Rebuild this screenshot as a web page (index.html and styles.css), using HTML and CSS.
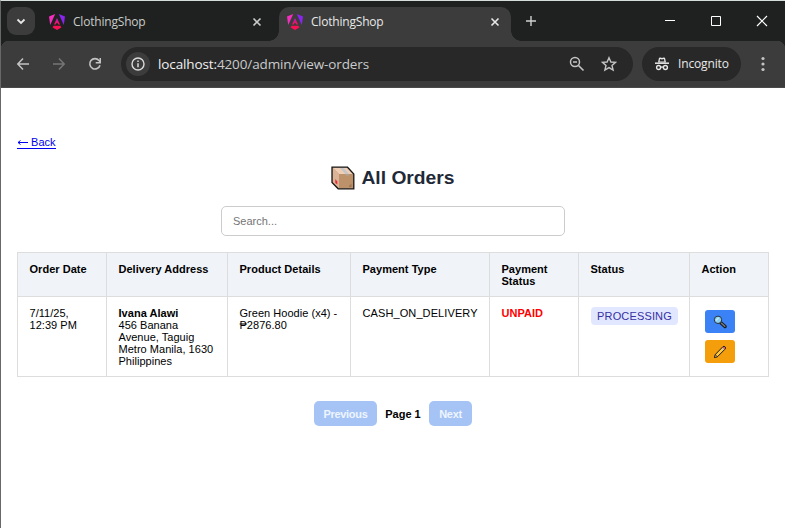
FILE: index.html
```html
<!DOCTYPE html>
<html lang="en">
<head>
<meta charset="utf-8">
<title>ClothingShop</title>
<link rel="stylesheet" href="styles.css">
</head>
<body>
<svg class="defs" width="0" height="0" aria-hidden="true">
  <defs>
    <linearGradient id="ng2" x1="0" y1="0" x2="0" y2="1"><stop offset="0" stop-color="#b01ad0"/><stop offset="1" stop-color="#ff0f50"/></linearGradient>
    <symbol id="angular" viewBox="0 0 16 16">
      <path fill="#f62ec0" d="M6.200 0 1.200 11 0 2.500z"/>
      <path fill="#8a25f0" d="M9.800 0l5 11 1.200-8.500z"/>
      <path fill="url(#ng2)" d="M8 4 11 10.500H9.400L8.800 9.200H7.200L6.600 10.500H5z"/>
      <path fill="#f80f55" d="M4.500 11.700h7l.9 1.900L8 16l-4.400-2.400z"/>
    </symbol>
    <symbol id="close" viewBox="0 0 10 10"><path d="M1.500 1.500l7 7M8.500 1.500l-7 7" fill="none" stroke="currentColor" stroke-width="1.600"/></symbol>
  </defs>
</svg>
<div class="window">
  <header class="tabs">
    <div class="tab-search"><svg width="10" height="7" viewBox="0 0 10 7"><path d="M1.500 1.500 5 5l3.500-3.500" fill="none" stroke="#e6e6e6" stroke-width="1.800"/></svg></div>
    <div class="tab">
      <svg class="fav" width="16" height="16"><use href="#angular"/></svg>
      <span>ClothingShop</span>
      <svg class="x" width="10" height="10"><use href="#close"/></svg>
    </div>
    <div class="tab active">
      <svg class="fav" width="16" height="16"><use href="#angular"/></svg>
      <span>ClothingShop</span>
      <svg class="x" width="10" height="10"><use href="#close"/></svg>
    </div>
    <svg class="plus" width="12" height="12" viewBox="0 0 12 12"><path d="M6 1v10M1 6h10" stroke="#d0d0d0" stroke-width="1.400"/></svg>
    <div class="controls">
      <svg width="12" height="12" viewBox="0 0 12 12"><path d="M1 5.500h10" stroke="#fff"/></svg>
      <svg width="12" height="12" viewBox="0 0 12 12"><path d="M1.500 1.500h9v9h-9z" fill="none" stroke="#fff"/></svg>
      <svg width="12" height="12" viewBox="0 0 12 12"><path d="M1 1l10 10M11 1 1 11" stroke="#fff" stroke-width="1.200"/></svg>
    </div>
  </header>
  <div class="toolbar">
    <div class="nav">
      <svg width="14" height="14" viewBox="0 0 14 14"><path d="M7 1.500 1.800 7 7 12.500M2 7h11" fill="none" stroke="#c4c4c4" stroke-width="1.500"/></svg>
      <svg width="14" height="14" viewBox="0 0 14 14"><path d="M7 1.500 12.200 7 7 12.500M12 7H1" fill="none" stroke="#757575" stroke-width="1.500"/></svg>
      <svg width="14" height="14" viewBox="0 0 14 14"><path d="M12 8.200A5.200 5.200 0 1 1 11 3.500L12.200 5" fill="none" stroke="#c4c4c4" stroke-width="1.600"/><path d="M13 1v5.500H7.700V5H11.500V1z" fill="#c4c4c4"/></svg>
    </div>
    <div class="address">
      <div class="info"><svg width="14" height="14" viewBox="0 0 14 14"><circle cx="7" cy="7" r="6" fill="none" stroke="#dadada" stroke-width="1.400"/><path d="M7 6.200V10.300M7 3.500v1.600" stroke="#dadada" stroke-width="1.500"/></svg></div>
      <span class="url"><b>localhost:</b>4200/admin/view-orders</span>
      <svg class="lens" width="16" height="16" viewBox="0 0 16 16"><circle cx="6" cy="6" r="4.500" fill="none" stroke="#c4c4c4" stroke-width="1.500"/><path d="M9.500 9.500l5 5M4 6h4" stroke="#c4c4c4" stroke-width="1.600"/></svg>
      <svg class="star" width="16" height="16" viewBox="0 0 16 16"><path d="M8 1.700 9.900 6 14.600 6.400 11 9.500l1.100 4.600L8 11.600l-4.100 2.500L5 9.500 1.400 6.400 6.100 6z" fill="none" stroke="#c4c4c4" stroke-width="1.400"/></svg>
    </div>
    <div class="incognito">
      <svg width="14" height="14" viewBox="0 0 14 14"><path d="M3 5.500 4 .8 5.500.5 7 1 8.500.5 10 .8l1 4.700z" fill="#e6e6e6"/><path d="M4.600 4.600 5 2l2 .5L9 2l.4 2.600z" fill="#282828"/><path d="M0 6.200h14" stroke="#e6e6e6" stroke-width="1.500"/><g fill="none" stroke="#e6e6e6" stroke-width="1.400"><circle cx="3.600" cy="10.500" r="2"/><circle cx="10.400" cy="10.500" r="2"/><path d="M5.600 10.300q1.400-.8 2.800 0"/></g></svg>
      <span>Incognito</span>
    </div>
    <svg class="more" width="4" height="16" viewBox="0 0 4 16" fill="#c4c4c4"><circle cx="2" cy="2.500" r="1.600"/><circle cx="2" cy="8" r="1.600"/><circle cx="2" cy="13.500" r="1.600"/></svg>
  </div>
  <main class="page">
    <a class="back" href="#"><svg width="11" height="7" viewBox="0 0 11 7"><path d="M1 3.500h10M3.500 1.500 1 3.500l2.500 2" fill="none" stroke="currentColor"/></svg><span>&nbsp;Back</span></a>
    <h1>
      <svg width="24" height="24" viewBox="0 0 24 24"><path d="M1 1.200h15.500L22.800 8v14.800H7.200L1 16.500z" fill="#bd926a"/><path d="M1.500 1.500h15L22.500 8H8z" fill="#f0cdb5"/><path d="M1.500 1.500 8 8v14.500l-6.500-6z" fill="#dbb396"/><path d="M8.500 1.500h3.800L18 8h-3.500z" fill="#c5c6c8"/><path d="M14.500 8H18v2l-1-.7-1 .8-1.500-.8z" fill="#b2a193"/><path d="M4.300 13l2 2.500v3l-2-1.500z" fill="#ed2939"/><path d="M18 20l2.500-2.500V21H18z" fill="#9d7653"/><path d="M1 1.200h15.500L22.800 8v14.800H7.200L1 16.500z" fill="none" stroke="#171717" stroke-width="1.300"/></svg>
      <span>All Orders</span>
    </h1>
    <input class="search" type="text" placeholder="Search...">
    <table>
      <colgroup><col class="c1"><col class="c2"><col class="c3"><col class="c4"><col class="c5"><col class="c6"><col class="c7"></colgroup>
      <thead><tr><th>Order Date</th><th>Delivery Address</th><th>Product Details</th><th>Payment Type</th><th>Payment<br>Status</th><th>Status</th><th>Action</th></tr></thead>
      <tbody><tr>
        <td>7/11/25,<br>12:39 PM</td>
        <td><strong>Ivana Alawi</strong><br>456 Banana<br>Avenue, Taguig<br>Metro Manila, 1630<br>Philippines</td>
        <td>Green Hoodie (x4) -<br>₱2876.80</td>
        <td class="type">CASH_ON_DELIVERY</td>
        <td class="unpaid">UNPAID</td>
        <td><span class="badge">PROCESSING</span></td>
        <td class="actions">
          <button class="view" aria-label="View"><svg width="14" height="14" viewBox="0 0 14 14"><path d="M7.500 7.500l4.500 4" stroke="#171a20" stroke-width="3.400" stroke-linecap="round"/><path d="M8.500 8.300l3.300 3" stroke="#777b80" stroke-width="1.500" stroke-linecap="round"/><circle cx="5" cy="4.800" r="3.700" fill="#8ed0f0" stroke="#27313b" stroke-width="1"/><path d="M3 5.500 5.700 2.800" stroke="#c5eafa" stroke-width="1.300"/></svg></button>
          <button class="edit" aria-label="Edit"><svg width="14" height="14" viewBox="0 0 14 14"><path d="M1.500 12.500 2.500 9.300 9.800 1.800Q11 .8 12.100 1.900T12 4.200L4.700 11.500z" fill="#ffc83d" stroke="#171717"/><path d="M9.600 2.500l.8-.5q.7-.3 1.300.3t.1 1.400l-.5.700z" fill="#e64b62"/><path d="M9 3l2 2" stroke="#c4c6c8"/><path d="M1.500 12.500 2.300 9.700l2.100 2z" fill="#edc39c" stroke="#171717" stroke-width=".7"/></svg></button>
        </td>
      </tr></tbody>
    </table>
    <nav class="pager"><button class="prev" disabled>Previous</button><span>Page 1</span><button class="next" disabled>Next</button></nav>
  </main>
</div>
</body>
</html>
```
FILE: styles.css
```css
* { box-sizing: border-box; }
body { margin: 0; background: #fff; font: 11px/12px "Liberation Sans", Arial, sans-serif; color: #000; }
svg { display: block; flex: none; }
.defs { position: absolute; }
.window { width: 785px; height: 528px; border-top: 1px solid #d5dedb; border-left: 1px solid #68686a; overflow: hidden; background: #fff; }
.tabs { position: relative; z-index: 1; height: 40px; background: #1f2120; display: flex; padding: 6px 17px 0 6px; font: 12px/16px "Open Sans", "Noto Sans", sans-serif; color: #c9cbca; }
.tab-search { width: 28px; height: 28px; border-radius: 9px; background: #3c3c3c; display: flex; align-items: center; justify-content: center; }
.tab { width: 230px; height: 34px; display: flex; align-items: center; padding: 0 9px 5px 8px; margin-left: 6px; }
.tab + .tab { margin-left: 8px; }
.tab span { margin-left: 8px; letter-spacing: -.2px; }
.tab .x { margin-left: auto; }
.tab.active { position: relative; width: 232px; background: #3c3c3c; border-radius: 10px 10px 0 0; color: #e8e8e8; padding-right: 11px; }
.tab.active::before, .tab.active::after { content: ""; position: absolute; bottom: 0; width: 10px; height: 10px; }
.tab.active::before { left: -10px; background: radial-gradient(circle at 0 0, transparent 9.500px, #3c3c3c 10px); }
.tab.active::after { right: -10px; background: radial-gradient(circle at 100% 0, transparent 9.500px, #3c3c3c 10px); }
.plus { margin: 8px 0 0 14px; }
.controls { display: flex; gap: 34px; margin: 8px 0 0 auto; }
.toolbar { height: 47px; background: radial-gradient(circle at 8px 8px, #3c3c3c 8px, #1f2120 8.500px) 0 0 / 8px 8px no-repeat, radial-gradient(circle at 0 8px, #3c3c3c 8px, #1f2120 8.500px) 100% 0 / 8px 8px no-repeat, #3c3c3c; border-bottom: 1px solid #4a4a4a; display: flex; align-items: center; padding-left: 15px; font-family: "Open Sans", "Noto Sans", sans-serif; }
.nav { display: flex; gap: 22px; width: 105px; }
.address { width: 512px; height: 34px; border-radius: 17px; background: #282828; display: flex; align-items: center; padding: 0 16px 0 5px; }
.info { width: 24px; height: 24px; border-radius: 50%; background: #3c3c3c; display: flex; align-items: center; justify-content: center; }
.url { font-size: 13.500px; letter-spacing: -.12px; line-height: 18px; color: #c9cbcc; margin-left: 8px; white-space: nowrap; }
.url b { font-weight: 400; color: #f0f0f0; }
.lens { margin-left: auto; }
.star { margin-left: 16px; }
.incognito { width: 99px; height: 34px; margin-left: 9px; border-radius: 17px; background: #282828; color: #e8e8e8; display: flex; align-items: center; padding-left: 13px; gap: 9px; font-size: 12px; letter-spacing: -.15px; }
.more { margin-left: 20px; }
.page { padding: 48px 16px 0; display: flex; flex-direction: column; }
.back { align-self: flex-start; display: flex; align-items: center; color: #0000ee; height: 13px; border-bottom: 1px solid #0000ee; text-decoration: none; }
h1 { margin: 15px 0 0; display: flex; align-items: center; justify-content: center; gap: 6px; height: 28px; font-size: 19.250px; line-height: 24px; color: #1f2937; }
.search { align-self: center; width: 344px; height: 30px; margin-top: 14px; border: 1px solid #ccc; border-radius: 5px; padding: 0 11px; font: 11px "Liberation Sans", Arial, sans-serif; outline: 0; }
.search::placeholder { color: #757575; opacity: 1; }
table { margin-top: 16px; width: 752px; table-layout: fixed; border-collapse: collapse; }
.c1 { width: 89px; } .c2 { width: 121px; } .c3 { width: 123px; } .c4 { width: 139px; } .c5 { width: 89px; } .c6 { width: 111px; } .c7 { width: 79px; }
th, td { border: 1px solid #ddd; padding: 10px 0 0 11.500px; text-align: left; vertical-align: top; white-space: nowrap; letter-spacing: .03px; }
th { height: 44px; background: #f0f4f9; }
td { height: 80px; }
td.type { letter-spacing: .1px; }
.unpaid { color: #f00; font-weight: bold; }
.badge { display: block; width: 87px; height: 18px; line-height: 18px; text-align: center; letter-spacing: .15px; background: #e0e7ff; color: #3730a3; border-radius: 4px; margin-left: .5px; }
td.actions { padding: 13px 0 0 15px; }
.actions button { display: flex; align-items: center; justify-content: center; width: 30px; height: 23px; border: 0; border-radius: 3px; padding: 0; }
.view { background: #3b82f6; }
.actions .edit { background: #f59e0b; margin-top: 7px; }
.pager { display: flex; justify-content: center; align-items: center; margin-top: 24px; font-weight: bold; }
.pager button { height: 25px; padding: 0; border: 0; border-radius: 5px; background: #a5c3f5; color: #eef5ff; font: bold 11px "Liberation Sans", Arial, sans-serif; letter-spacing: -.3px; }
.prev { width: 63px; } .next { width: 43px; }
.pager span { width: 52px; text-align: center; }
```
